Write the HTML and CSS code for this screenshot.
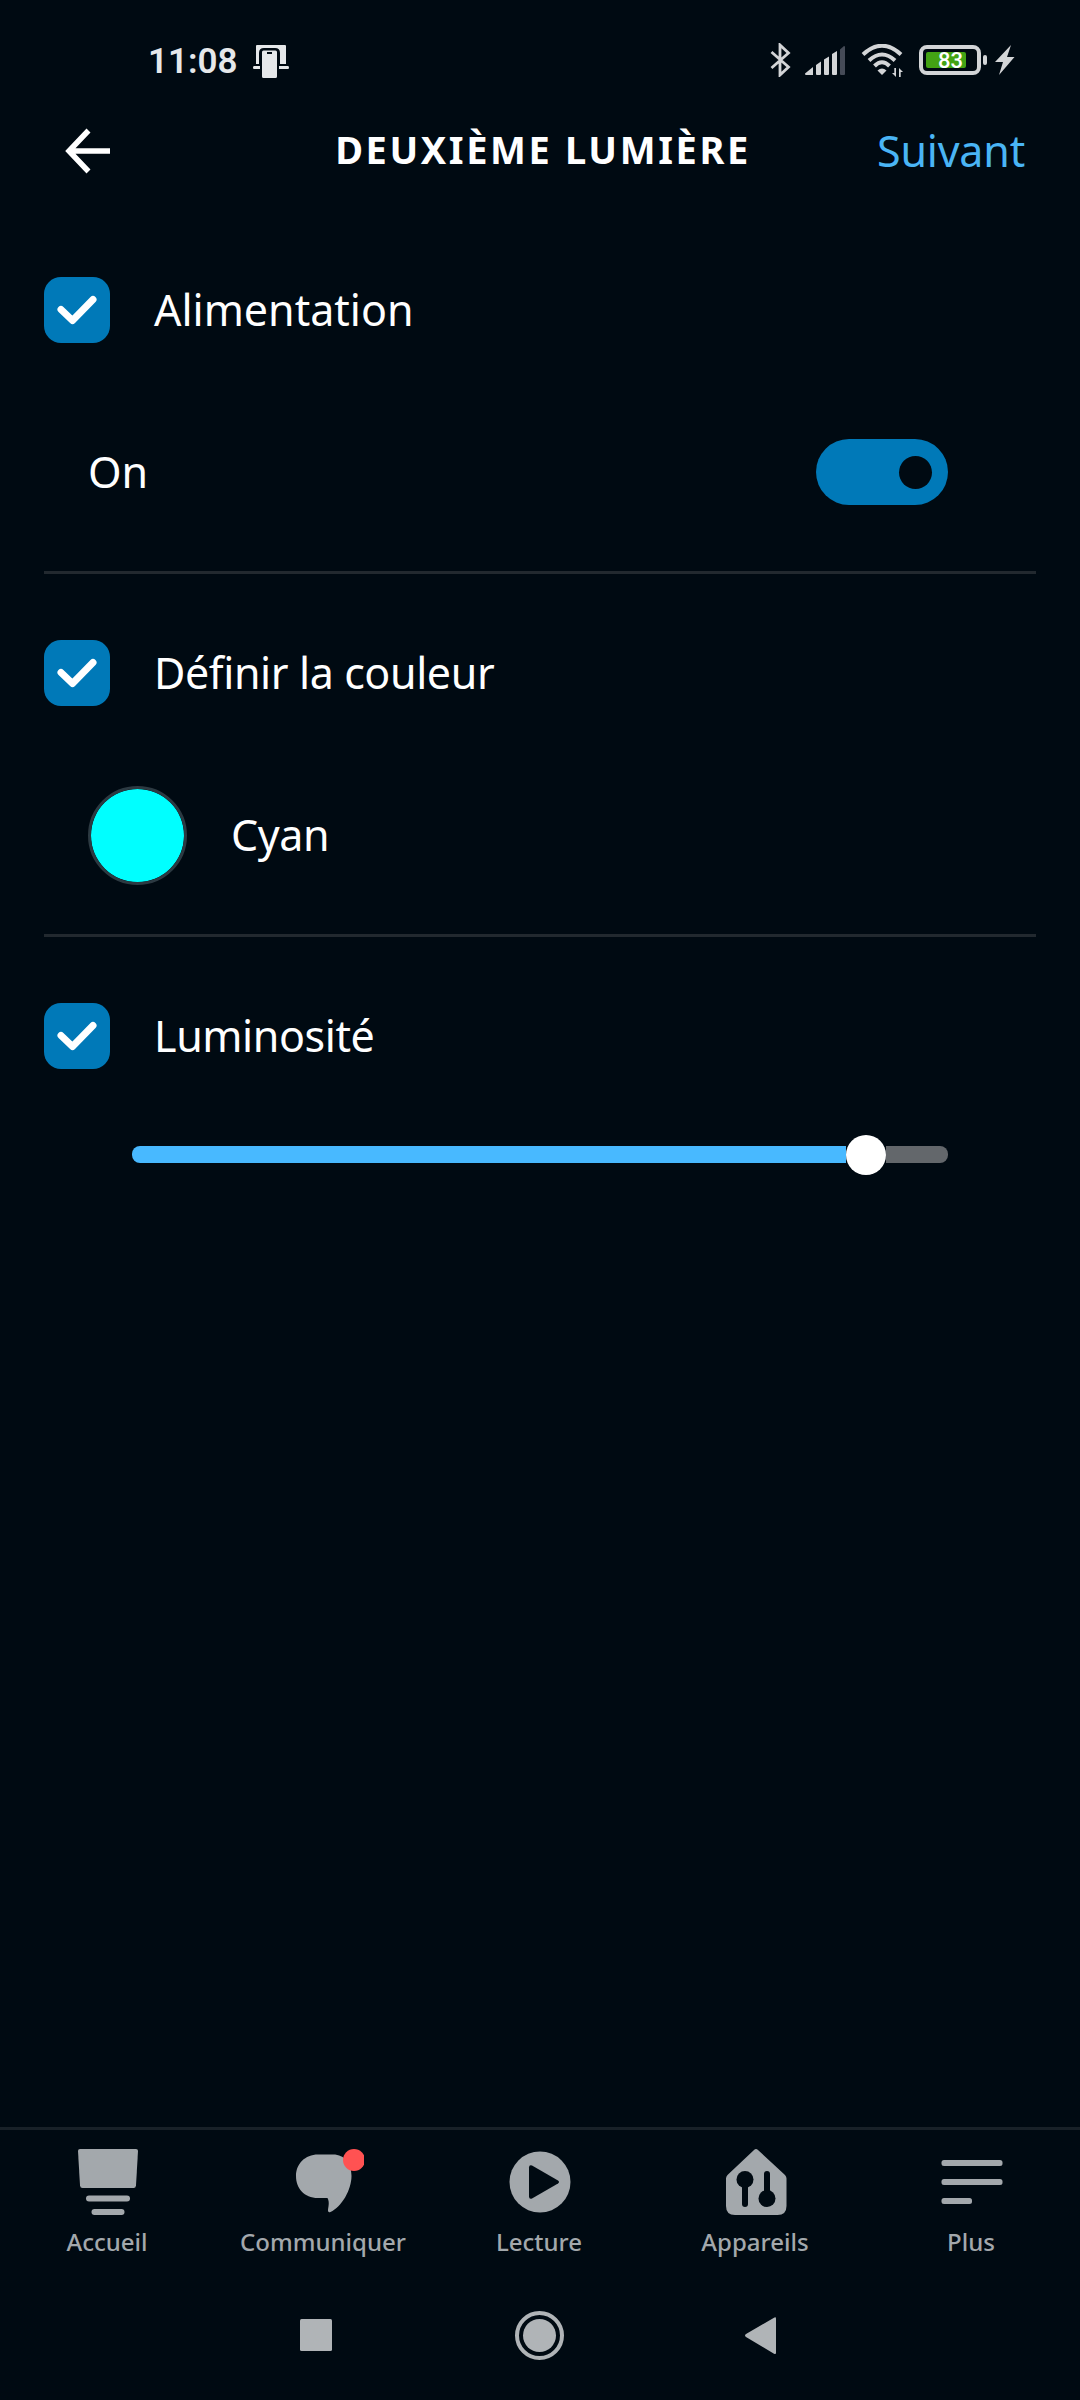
FILE: index.html
```html
<!DOCTYPE html>
<html lang="fr">
<head>
  <meta charset="UTF-8">
  <title>Deuxième lumière</title>
  <meta name="viewport" content="width=device-width, initial-scale=1.0">
  <link rel="stylesheet" href="styles.css">
</head>
<body>
  <div class="statusbar">
    <span class="heure">11:08</span>
    <svg class="ecran" width="36" height="33" viewBox="0 0 36 33">
      <path d="M3 1q0-1 1-1h28q1 0 1 1v18h-6V8q0-5-5-5H11q-5 0-5 5v11H3z"/>
      <path d="M1 21h6v3H1q-1 0-1-1.500T1 21zM26 21h9q1 0 1 1.500T35 24h-9z"/>
      <path fill-rule="evenodd" d="M9 7q0-1.500 1.500-1.500h12q1.500 0 1.500 1.500v24.500q0 1.500-1.500 1.500h-12q-1.500 0-1.500-1.500zM14 7v2h5V7z"/>
    </svg>
    <div class="etat">
      <svg width="22" height="34" viewBox="0 0 22 34">
        <path class="trait" d="M1.500 9l17 15L10 32V2l8.500 8L1.500 25" stroke-width="2.800"/>
      </svg>
      <svg class="reseau" width="40" height="29" viewBox="0 0 40 29">
        <path d="M0 27.500 8 21v8H1q-1 0-1-1.500zM11 19l5-3.500V28q0 1-1 1h-3q-1 0-1-1zM19 13.500l5-3V28q0 1-1 1h-3q-1 0-1-1zM27 8l5-3V28q0 1-1 1h-3q-1 0-1-1z"/>
        <path class="faible" d="M35 3.500 39 0q1 0 1 1v27q0 1-1 1h-3q-1 0-1-1z"/>
      </svg>
      <svg class="wifi" width="43" height="34" viewBox="0 0 43 34">
        <path class="trait" d="M2 10.500Q21 -7 40 10.500M8 16.500Q21 4.500 34 16.500M13.500 22Q21 14.500 28.500 22" stroke-width="4"/>
        <path d="M16.500 26.500q4.500-4 9 0L21 31z"/>
        <path d="M35 24v9l-4-4h2.300v-5zM38 33v-9l4 4h-2.300v5z"/>
      </svg>
      <div class="batterie"><span>83</span></div>
      <svg class="eclair" width="20" height="30" viewBox="0 0 20 30">
        <path d="M16 0 0 17h8L4 30 19.500 12H12z"/>
      </svg>
    </div>
  </div>

  <header>
    <svg class="retour" width="46" height="46" viewBox="0 0 46 46">
      <path d="M23.500 2.500 4 23l19.500 20.500M5 23h40"/>
    </svg>
    <h1>DEUXIÈME LUMIÈRE</h1>
    <a class="suivant" href="#">Suivant</a>
  </header>

  <main>
    <section>
      <div class="option">
        <span class="case"><svg width="66" height="66" viewBox="0 0 66 66"><path d="M17 32.500 28.500 43.500 49 22.500"/></svg></span>
        <span>Alimentation</span>
      </div>
      <div class="detail">
        <span>On</span>
        <span class="interrupteur"></span>
      </div>
    </section>

    <section>
      <div class="option">
        <span class="case"><svg width="66" height="66" viewBox="0 0 66 66"><path d="M17 32.500 28.500 43.500 49 22.500"/></svg></span>
        <span class="serre">Définir la couleur</span>
      </div>
      <div class="detail">
        <span class="pastille"></span>
        <span class="serre">Cyan</span>
      </div>
    </section>

    <section>
      <div class="option">
        <span class="case"><svg width="66" height="66" viewBox="0 0 66 66"><path d="M17 32.500 28.500 43.500 49 22.500"/></svg></span>
        <span class="serre">Luminosité</span>
      </div>
      <div class="curseur">
        <div class="rempli"></div>
        <div class="bouton"></div>
        <div class="reste"></div>
      </div>
    </section>
  </main>

  <nav class="onglets">
    <a href="#">
      <svg width="80" height="70" viewBox="0 0 80 70">
        <path d="M12 0h56q2 0 2 2l-2 34.500q-.2 2.500-2.500 2.500h-51q-2.300 0-2.500-2.500L10 2q0-2 2-2z"/>
        <rect x="18" y="46.500" width="44" height="6" rx="3"/>
        <rect x="23.500" y="60" width="33" height="6" rx="3"/>
      </svg>
      <span>Accueil</span>
    </a>
    <a href="#">
      <svg width="80" height="70" viewBox="0 0 80 70">
        <path d="M34 5.500h15C61 5.500 67.500 15 67.500 27 67.500 41 57.500 58 46.500 63q-2.500 1-2.500-1.500c0-3 2-8-.5-12.500H34C20 49 12 39 12 27S21 5.500 34 5.500z"/>
        <circle class="alerte" cx="70" cy="11" r="11"/>
      </svg>
      <span>Communiquer</span>
    </a>
    <a href="#">
      <svg width="80" height="70" viewBox="0 0 80 70">
        <circle cx="40" cy="33" r="30.500"/>
        <path class="creux" d="M29 18.500q0-3 3-2l26 15q2 1.500 0 3l-26 15q-3 1-3-2z"/>
      </svg>
      <span>Lecture</span>
    </a>
    <a href="#">
      <svg width="80" height="70" viewBox="0 0 80 70">
        <path d="M38 1q2-2 4 0l27 25q1.500 1.500 1.500 3.500V57q0 9-9 9H19q-9 0-9-9V29.500q0-2 1.500-3.500z"/>
        <circle class="creux" cx="29" cy="30.500" r="8.500"/>
        <rect class="creux" x="26" y="33" width="6" height="25" rx="3"/>
        <rect class="creux" x="48" y="22" width="6" height="25" rx="3"/>
        <circle class="creux" cx="51" cy="49.500" r="8.500"/>
      </svg>
      <span>Appareils</span>
    </a>
    <a href="#">
      <svg width="80" height="70" viewBox="0 0 80 70">
        <rect x="9.500" y="11" width="61" height="6" rx="2.500"/>
        <rect x="9.500" y="30" width="61" height="6" rx="2.500"/>
        <rect x="9.500" y="49" width="30.500" height="6" rx="2.500"/>
      </svg>
      <span>Plus</span>
    </a>
  </nav>

  <div class="systeme">
    <svg width="50" height="50" viewBox="0 0 50 50"><rect x="9" y="9" width="32" height="32" rx="1.500"/></svg>
    <svg width="50" height="50" viewBox="0 0 50 50">
      <circle class="anneau" cx="24.500" cy="25.500" r="22.500"/>
      <circle cx="24.500" cy="25.500" r="16.500"/>
    </svg>
    <svg width="50" height="50" viewBox="0 0 50 50"><path d="M36 7.700q2-1.200 2 1v34q0 2.200-2 1L8 27q-2-1.500 0-3z"/></svg>
  </div>
</body>
</html>
```
FILE: styles.css
```css
* {
  box-sizing: border-box;
}

body {
  margin: 0;
  height: 2400px;
  display: flex;
  flex-direction: column;
  background: #000a12;
  color: #fff;
  font-family: "Noto Sans", "Open Sans", sans-serif;
  font-size: 43px;
  line-height: 60px;
}

svg {
  display: block;
  flex: none;
}

a {
  color: inherit;
  text-decoration: none;
}

/* barre d'état */
.statusbar {
  height: 110px;
  padding: 10px 65px 0 148px;
  display: flex;
  align-items: center;
  font-family: Roboto, sans-serif;
}

.statusbar svg {
  fill: #d3d5d7;
}

.heure {
  width: 105px;
  padding-top: 3px;
  font-size: 35px;
  font-weight: 600;
  color: #e6e8ea;
}

.statusbar .ecran {
  margin-top: 3px;
  fill: #e6e8ea;
}

.etat {
  margin-left: auto;
  display: flex;
  align-items: center;
}

.statusbar .trait {
  fill: none;
  stroke: #d3d5d7;
}

.reseau {
  margin-left: 13px;
}

.faible {
  fill: #454b57;
}

.wifi {
  margin: 2px 0 0 16px;
}

.batterie {
  position: relative;
  width: 62px;
  height: 30px;
  margin-left: 15px;
  padding: 3px;
  border: 4px solid #d3d5d7;
  border-radius: 8px;
}

.batterie span {
  display: block;
  width: 40px;
  height: 16px;
  padding-left: 12px;
  border-radius: 2px;
  background: #43a314;
  font-size: 22px;
  font-weight: 500;
  line-height: 18px;
}

.batterie::after {
  content: "";
  position: absolute;
  top: 6px;
  right: -10px;
  width: 4px;
  height: 10px;
  border-radius: 2px;
  background: #d3d5d7;
}

.eclair {
  margin-left: 14px;
}

/* en-tête */
header {
  height: 101px;
  padding: 0 55px 20px 65px;
  display: grid;
  grid-template-columns: 196px 1fr 200px;
  align-items: center;
}

.retour {
  fill: none;
  stroke: #fff;
  stroke-width: 5.5;
}

h1 {
  margin: 0 0 4px;
  font-size: 38px;
  font-weight: 700;
  letter-spacing: 2.6px;
  text-align: center;
  white-space: nowrap;
}

.suivant {
  color: #4ab5f5;
  letter-spacing: -0.2px;
  text-align: right;
}

/* réglages */
main {
  flex: 1;
  padding: 0 44px;
}

section {
  height: 363px;
  padding-top: 66px;
  border-bottom: 3px solid #22292f;
}

section:last-child {
  border-bottom: none;
}

.option {
  height: 66px;
  display: flex;
  align-items: center;
  gap: 44px;
}

.serre {
  letter-spacing: -0.4px;
}

.case {
  background: #0079b8;
  border-radius: 17px;
}

.case path {
  fill: none;
  stroke: #fff;
  stroke-width: 7;
  stroke-linecap: round;
  stroke-linejoin: round;
}

.detail {
  height: 99px;
  margin-top: 80px;
  padding: 0 44px;
  display: flex;
  align-items: center;
  gap: 44px;
}

.detail span:not(.pastille) {
  margin-bottom: 1px;
}

.interrupteur {
  width: 132px;
  height: 66px;
  margin: 0 44px 0 auto;
  padding: 17px 16px;
  border-radius: 33px;
  background: #0079b8;
}

.interrupteur::after {
  content: "";
  display: block;
  width: 33px;
  height: 33px;
  margin-left: auto;
  border-radius: 50%;
  background: #000a12;
}

.pastille {
  width: 99px;
  height: 99px;
  border: 3px solid #2c3a42;
  border-radius: 50%;
  background: #00ffff;
  background-clip: padding-box;
}

.curseur {
  margin: 66px 88px 0;
  display: flex;
  align-items: center;
}

.rempli {
  width: 714px;
  height: 17px;
  margin-bottom: 1px;
  border-radius: 8px 0 0 8px;
  background: #48b9ff;
}

.bouton {
  width: 40px;
  height: 40px;
  border-radius: 50%;
  background: #fff;
}

.reste {
  flex: 1;
  height: 17px;
  margin-bottom: 1px;
  border-radius: 0 8px 8px 0;
  background: #63676b;
}

/* onglets du bas */
.onglets {
  height: 153px;
  padding-top: 19px;
  display: grid;
  grid-template-columns: repeat(5, 1fr);
  border-top: 3px solid #182128;
  color: #a3a8ac;
}

.onglets a {
  display: flex;
  flex-direction: column;
  align-items: center;
  font-size: 24px;
  font-weight: 500;
  line-height: 46px;
}

.onglets span {
  margin-right: 2px;
}

.onglets svg {
  fill: #a3a8ac;
}

.onglets .creux {
  fill: #000a12;
}

.onglets .alerte {
  fill: #ff5252;
}

/* navigation système */
.systeme {
  height: 120px;
  padding: 30px 292px 0 291px;
  display: flex;
  justify-content: space-between;
}

.systeme svg {
  fill: #b0b4b7;
}

.systeme .anneau {
  fill: none;
  stroke: #b0b4b7;
  stroke-width: 4;
}
```
